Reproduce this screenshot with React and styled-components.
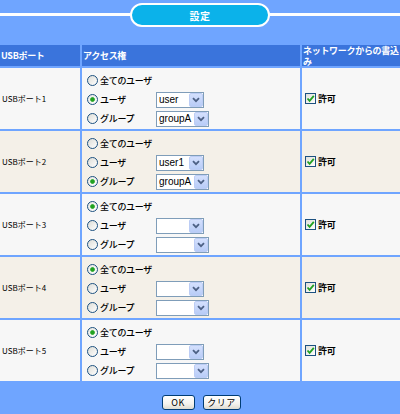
import React from "react";
import styled, { createGlobalStyle } from "styled-components";

const Global = createGlobalStyle`
  html, body { margin: 0; padding: 0; background: #6fa5ff; }
  body { font-family: "Noto Sans CJK JP", "DejaVu Sans", sans-serif; color: #000; }
  * { box-sizing: border-box; }
`;

const Page = styled.div`
  width: 400px;
  height: 414px;
  background: #6fa5ff;
  overflow: hidden;
`;

const TitleBar = styled.div`
  display: flex;
  align-items: center;
  height: 24px;
  margin-top: 3px;
`;

const TitleLine = styled.div`
  flex: 1;
  height: 3px;
  background: #ffffff;
  margin-top: -1px;
`;

const TitlePill = styled.div`
  width: 140px;
  height: 24px;
  border: 2px solid #ffffff;
  border-radius: 12px;
  background: #0bb2ea;
  color: #ffffff;
  font-weight: bold;
  font-size: 10px;
  display: flex;
  align-items: center;
  justify-content: center;
  letter-spacing: 0.5px;
`;

const Table = styled.div`
  margin-top: 18px;
  display: grid;
  grid-template-columns: 80px 218px 98px;
  grid-template-rows: 21px repeat(5, 61px);
  gap: 2px;
`;

const HeadCell = styled.div`
  background: #3a74dc;
  color: #ffffff;
  font-weight: bold;
  font-size: 9px;
  line-height: 11px;
  letter-spacing: -0.3px;
  padding-left: 1px;
  display: flex;
  align-items: center;
`;

const PortCell = styled.div`
  background: ${(p) => (p.$alt ? "#f4f0e8" : "#f7f7f7")};
  font-size: 8px;
  padding-left: 2px;
  display: flex;
  align-items: center;
`;

const AccessCell = styled.div`
  background: ${(p) => (p.$alt ? "#f4f0e8" : "#f7f7f7")};
  padding-top: 3px;
  display: flex;
  flex-direction: column;
`;

const WriteCell = styled.div`
  background: ${(p) => (p.$alt ? "#f4f0e8" : "#f7f7f7")};
  display: flex;
  align-items: center;
  padding-left: 3px;
`;

const OptionLine = styled.div`
  height: 19px;
  display: flex;
  align-items: center;
`;

const RadioLabel = styled.label`
  width: 74px;
  display: flex;
  align-items: center;
  font-size: 9px;
  font-weight: 500;
  letter-spacing: -0.3px;
`;

const Radio = styled.span`
  width: 11px;
  height: 11px;
  margin: 0 2px 0 5px;
  border-radius: 50%;
  border: 1px solid #1c5180;
  background: ${(p) =>
    p.$checked
      ? "radial-gradient(circle, #22a122 0 1.8px, #7fcc7f 2.3px, transparent 2.8px), linear-gradient(135deg, #e6e6e0, #ffffff)"
      : "linear-gradient(135deg, #dcdcd6, #ffffff)"};
  flex: none;
`;

const SelectBox = styled.div`
  width: ${(p) => p.$w}px;
  height: 16px;
  border: 1px solid #7f9db9;
  background: #ffffff;
  display: flex;
  align-items: stretch;
`;

const SelectText = styled.span`
  flex: 1;
  font-family: "Liberation Sans", Arial, sans-serif;
  font-size: 10px;
  line-height: 14px;
  padding-left: 2px;
  overflow: hidden;
  white-space: nowrap;
`;

const SelectButton = styled.span`
  width: 14px;
  background: linear-gradient(180deg, #d4e0fd, #b8ccf7);
  border: 1px solid #bccdf5;
  border-radius: 2px;
  display: flex;
  align-items: center;
  justify-content: center;
`;

const CheckBox = styled.span`
  width: 11px;
  height: 11px;
  border: 1px solid #1c5180;
  background: linear-gradient(135deg, #e0e0da, #ffffff);
  display: flex;
  align-items: center;
  justify-content: center;
  margin-right: 2px;
`;

const CheckLabel = styled.span`
  font-size: 9px;
  font-weight: bold;
  letter-spacing: -0.3px;
`;

const ButtonRow = styled.div`
  margin-top: 14px;
  display: flex;
  justify-content: center;
  gap: 8px;
  padding-left: 2px;
`;

const Button = styled.button`
  width: ${(p) => p.$w}px;
  height: 15px;
  padding: 0;
  border: 1px solid #003c74;
  border-radius: 3px;
  background: linear-gradient(180deg, #ffffff 0%, #f4f3ee 60%, #dedbd0 100%);
  font-family: "Noto Sans CJK JP", "DejaVu Sans", sans-serif;
  font-size: 9px;
  line-height: 13px;
  color: #000;
  letter-spacing: 0.5px;
`;

const Chevron = () => (
  <svg width="8" height="6" viewBox="0 0 8 6">
    <path d="M1 1.2 L4 4.2 L7 1.2" fill="none" stroke="#4d6185" strokeWidth="1.8" />
  </svg>
);

const Check = () => (
  <svg width="9" height="9" viewBox="0 0 9 9">
    <path d="M1.5 4.5 L3.6 6.8 L7.8 1.8" fill="none" stroke="#21a121" strokeWidth="1.8" />
  </svg>
);

const Select = ({ w, value }) => (
  <SelectBox $w={w}>
    <SelectText>{value}</SelectText>
    <SelectButton>
      <Chevron />
    </SelectButton>
  </SelectBox>
);

const rows = [
  { port: "USBポート1", mode: "user", user: "user", group: "groupA" },
  { port: "USBポート2", mode: "group", user: "user1", group: "groupA" },
  { port: "USBポート3", mode: "all", user: "", group: "" },
  { port: "USBポート4", mode: "all", user: "", group: "" },
  { port: "USBポート5", mode: "all", user: "", group: "" },
];

export default function App() {
  return (
    <Page>
      <Global />
      <TitleBar>
        <TitleLine />
        <TitlePill>設定</TitlePill>
        <TitleLine />
      </TitleBar>
      <Table>
        <HeadCell>USBポート</HeadCell>
        <HeadCell>アクセス権</HeadCell>
        <HeadCell>ネットワークからの書込み</HeadCell>
        {rows.map((r, i) => {
          const alt = i % 2 === 1;
          return (
            <React.Fragment key={r.port}>
              <PortCell $alt={alt}>{r.port}</PortCell>
              <AccessCell $alt={alt}>
                <OptionLine>
                  <RadioLabel>
                    <Radio $checked={r.mode === "all"} />
                    全てのユーザ
                  </RadioLabel>
                </OptionLine>
                <OptionLine>
                  <RadioLabel>
                    <Radio $checked={r.mode === "user"} />
                    ユーザ
                  </RadioLabel>
                  <Select w={48} value={r.user} />
                </OptionLine>
                <OptionLine>
                  <RadioLabel>
                    <Radio $checked={r.mode === "group"} />
                    グループ
                  </RadioLabel>
                  <Select w={53} value={r.group} />
                </OptionLine>
              </AccessCell>
              <WriteCell $alt={alt}>
                <CheckBox>
                  <Check />
                </CheckBox>
                <CheckLabel>許可</CheckLabel>
              </WriteCell>
            </React.Fragment>
          );
        })}
      </Table>
      <ButtonRow>
        <Button $w={33}>OK</Button>
        <Button $w={38}>クリア</Button>
      </ButtonRow>
    </Page>
  );
}
